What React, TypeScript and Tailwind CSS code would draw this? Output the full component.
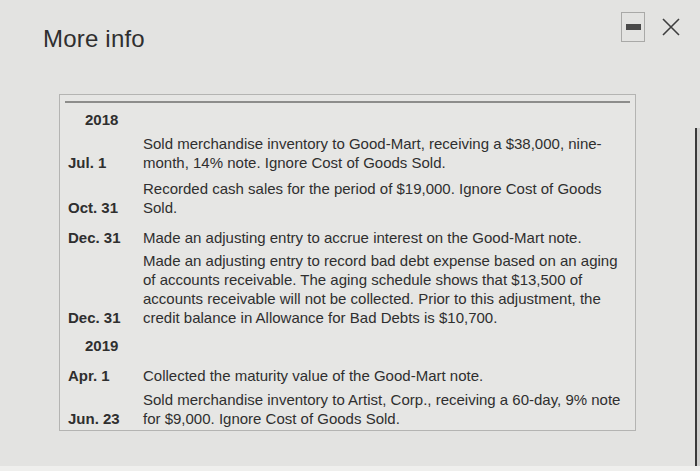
import React from 'react';

type Row =
  | { kind: 'year'; label: string; gap: number }
  | { kind: 'entry'; date: string; lines: string[]; gap: number };

const rows: Row[] = [
  { kind: 'year', label: '2018', gap: 0 },
  {
    kind: 'entry',
    date: 'Jul. 1',
    gap: 5,
    lines: [
      'Sold merchandise inventory to Good-Mart, receiving a $38,000, nine-',
      'month, 14% note. Ignore Cost of Goods Sold.',
    ],
  },
  {
    kind: 'entry',
    date: 'Oct. 31',
    gap: 7,
    lines: ['Recorded cash sales for the period of $19,000. Ignore Cost of Goods', 'Sold.'],
  },
  {
    kind: 'entry',
    date: 'Dec. 31',
    gap: 11,
    lines: ['Made an adjusting entry to accrue interest on the Good-Mart note.'],
  },
  {
    kind: 'entry',
    date: 'Dec. 31',
    gap: 4,
    lines: [
      'Made an adjusting entry to record bad debt expense based on an aging',
      'of accounts receivable. The aging schedule shows that $13,500 of',
      'accounts receivable will not be collected. Prior to this adjustment, the',
      'credit balance in Allowance for Bad Debts is $10,700.',
    ],
  },
  { kind: 'year', label: '2019', gap: 9 },
  {
    kind: 'entry',
    date: 'Apr. 1',
    gap: 11,
    lines: ['Collected the maturity value of the Good-Mart note.'],
  },
  {
    kind: 'entry',
    date: 'Jun. 23',
    gap: 5,
    lines: [
      'Sold merchandise inventory to Artist, Corp., receiving a 60-day, 9% note',
      'for $9,000. Ignore Cost of Goods Sold.',
    ],
  },
];

export default function App() {
  return (
    <div
      className="relative w-[700px] h-[471px] overflow-hidden bg-[#e3e3e1] text-[#2f2f2f]"
      style={{ fontFamily: '"Liberation Sans", Arial, sans-serif' }}
    >
      {/* header */}
      <div className="flex items-start h-[94px]">
        <h1 className="ml-[43px] mt-[24px] text-[24px] leading-[30px] tracking-[0.2px] text-[#2f2f2f]">
          More info
        </h1>
        <div className="ml-auto mt-[12px] mr-[20px] flex items-start gap-[17px]">
          <button className="w-[24px] h-[30px] border border-[#a9a9a7] flex items-center justify-center">
            <span className="block w-[15px] h-[6px] bg-[#4a4a4a]" />
          </button>
          <svg width="18" height="18" viewBox="0 0 18 18" className="mt-[6px]">
            <path d="M1 1 L17 17 M17 1 L1 17" stroke="#3e3e3e" strokeWidth="1.6" fill="none" />
          </svg>
        </div>
      </div>

      {/* table */}
      <div className="ml-[59px] w-[577px] h-[337px] border border-[#b4b4b2] bg-[#e6e6e4]">
        <div className="mx-[5px] mt-[6px] h-[2px] bg-[#8d8d8b]" />
        <div className="pt-[7px] text-[15px] leading-[19px]">
          {rows.map((row, i) =>
            row.kind === 'year' ? (
              <div key={i} className="flex" style={{ marginTop: row.gap }}>
                <div className="w-[83px] pl-[25px] font-bold">{row.label}</div>
              </div>
            ) : (
              <div key={i} className="flex items-end" style={{ marginTop: row.gap }}>
                <div className="w-[83px] shrink-0 pl-[8px] font-bold">{row.date}</div>
                <div className="whitespace-nowrap">
                  {row.lines.map((l, j) => (
                    <div key={j}>{l}</div>
                  ))}
                </div>
              </div>
            )
          )}
        </div>
      </div>

      {/* frame edges in photo */}
      <div className="absolute left-[695px] top-[128px] w-[2px] h-[343px] bg-[#3a3a3a]" />
      <div className="absolute left-[697px] top-[128px] w-[3px] h-[343px] bg-[#cfcfcd]" />
      <div className="absolute left-0 bottom-0 w-[700px] h-[5px] bg-[#efefed]" />
    </div>
  );
}
